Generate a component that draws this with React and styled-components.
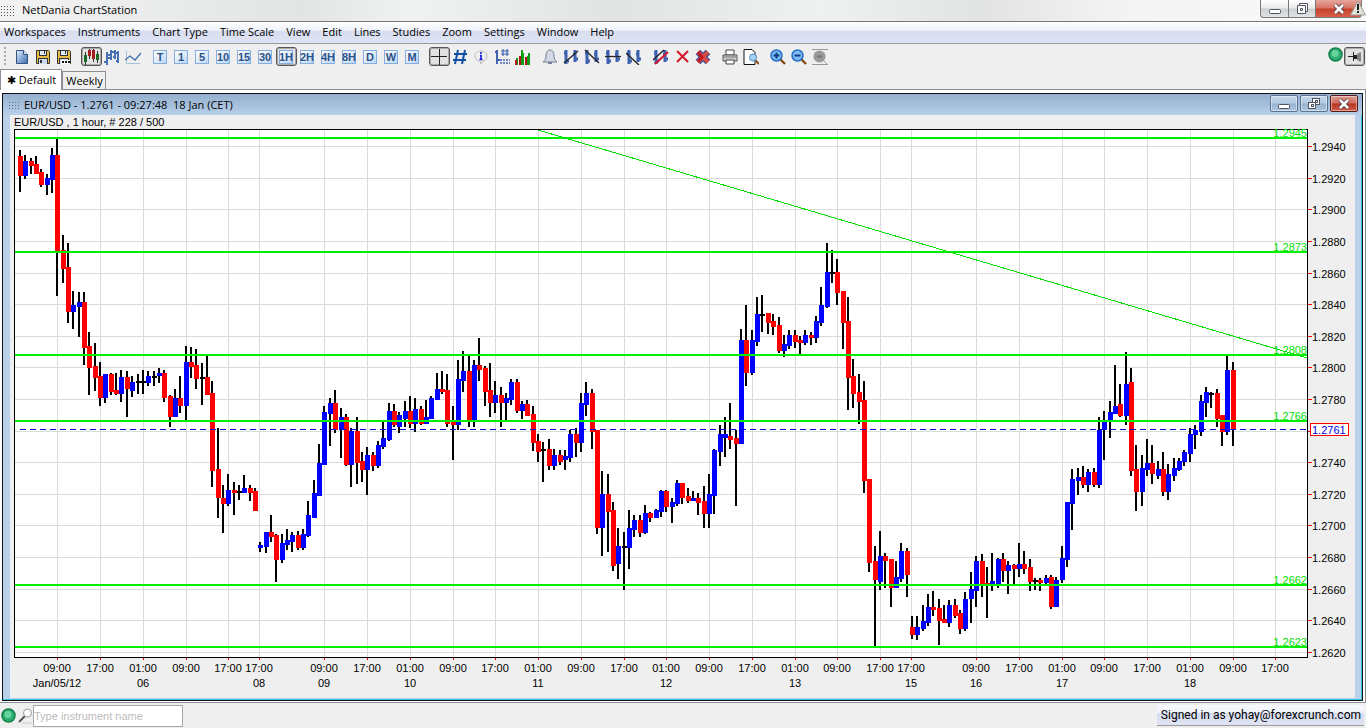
import styled, { createGlobalStyle, css } from "styled-components";

const GlobalStyle = createGlobalStyle`
  * { box-sizing: border-box; }
  body {
    margin: 0;
    background: #efefef;
    color: #000;
    font-family: "Open Sans", "Noto Sans", sans-serif;
    font-size: 11px;
  }
  button, input { font-family: inherit; }
  svg { display: block; }
`;

const Page = styled.div`
  display: flex;
  flex-direction: column;
  min-height: 100vh;
`;

const TitleBar = styled.header`
  display: flex;
  align-items: flex-start;
  height: 22px;
  padding-right: 4px;
  border-bottom: 1px solid #777;
  background: linear-gradient(90deg, #f2f2f2 0%, #e3e5e5 22%, #f0f1f1 30%, #e2e4e4 45%, #eff0f0 60%, #e2e3e3 72%, #f3f3f3 82%, #fafafa 100%);
`;

const AppName = styled.h1`
  flex: 1;
  margin: 0;
  padding-left: 7px;
  font-size: 11px;
  font-weight: 400;
  line-height: 20px;
`;

const Dots = styled.span`
  width: ${p => p.$width}px;
  height: ${p => p.$height}px;
  margin-top: ${p => p.$top}px;
  background: radial-gradient(circle, ${p => p.$color} 1px, transparent 1px) 0 0 / 3px 3px;
`;

const WindowButton = styled.button`
  display: flex;
  align-items: center;
  justify-content: center;
  width: ${p => p.$width}px;
  height: 18px;
  padding: 0;
  border: 1px solid #777b80;
  border-top: 0;
  border-right-width: ${p => (p.$close ? 1 : 0)}px;
  border-radius: ${p => (p.$close ? "0 0 4px 0" : p.$first ? "0 0 0 4px" : "0")};
  background: ${p => p.$close
    ? "linear-gradient(#e5a79c 0%, #d87464 48%, #c4412c 52%, #d8604a 100%)"
    : "linear-gradient(#fff 0%, #e9e9e9 48%, #cfd0d1 52%, #e2e3e4 100%)"};
`;

const Warning = styled.span`
  position: absolute;
  top: 0;
  right: 0;
`;

const MenuBar = styled.nav`
  display: flex;
  align-items: flex-start;
  gap: 12px;
  height: 22px;
  padding-left: 4px;
  border-bottom: 1px solid #999;
  background: linear-gradient(#fff 0%, #eef1f9 40%, #d7ddf0 42%, #e0e4f4 100%);
`;

const MenuItem = styled.button`
  padding: 0;
  border: 0;
  background: none;
  font-size: 11px;
  line-height: 20px;
  color: #000;
  white-space: nowrap;
`;

const ToolBar = styled.div`
  display: flex;
  align-items: flex-start;
  gap: 6px;
  height: 25px;
  padding: 3px 1px 0 4px;
`;

const Grip = styled.span`
  width: 2px;
  height: 20px;
  background: repeating-linear-gradient(#aaa 0 2px, transparent 2px 4px);
`;

const ToolGroup = styled.div`
  display: flex;
`;

const ToolButton = styled.button`
  display: flex;
  align-items: center;
  justify-content: center;
  width: 21px;
  height: 19px;
  padding: 0 1px 0 0;
  border: 0;
  background: none;
  ${p => p.$pressed && css`
    border: 1px solid #555;
    border-radius: 3px;
    box-shadow: inset 0 0 0 1px #aaa;
    background: #e2e2e2;
  `}
`;

const PeriodBox = styled.span`
  display: flex;
  align-items: center;
  justify-content: center;
  flex: none;
  width: 14px;
  height: 14px;
  border: 1px solid #84aee0;
  background: linear-gradient(135deg, #fff, #bcd6f4);
  font: bold 11px/12px "Liberation Sans", Arial, sans-serif;
  color: #2d5288;
`;

const Status = styled.div`
  display: flex;
  gap: 1px;
  margin-left: auto;
`;

const Tabs = styled.div`
  display: flex;
  align-items: flex-end;
  height: 21px;
  border-bottom: 1px solid #8d8d95;
`;

const Tab = styled.button`
  height: ${p => (p.$active ? 21 : 18)}px;
  margin-bottom: ${p => (p.$active ? -1 : 0)}px;
  padding: 0 ${p => (p.$active ? 5 : 2)}px 0 ${p => (p.$active ? 6 : 3)}px;
  border: 1px solid #8d8d95;
  border-bottom: 0;
  background: ${p => (p.$active ? "#fff" : "#efefef")};
  font-size: 11px;
  line-height: 18px;
  color: #000;
  white-space: nowrap;
`;

const Desktop = styled.main`
  padding: 3px 2px 1px 2px;
  border-right: 1px solid #8d8d95;
  border-bottom: 1px solid #8d8d95;
  background: #fff;
`;

const ChartWindow = styled.section`
  border: 1px solid #111;
  background: #b9d1ea;
  box-shadow: inset -1px -1px #35c5e0;
`;

const ChartTitle = styled.div`
  display: flex;
  gap: 2px;
  height: 21px;
  padding: 1px 4px 0 5px;
  background: linear-gradient(#94b0ce, #b7cfe9);
`;

const ChartName = styled.h2`
  flex: 1;
  margin: 0;
  padding-left: 2px;
  font-size: 11px;
  font-weight: 400;
  line-height: 20px;
  white-space: pre;
`;

const ChartButton = styled.button`
  display: flex;
  align-items: center;
  justify-content: center;
  width: 28px;
  height: 17px;
  padding: 0;
  border: 1px solid ${p => (p.$close ? "#5b1a14" : "#587391")};
  border-radius: 2px;
  box-shadow: inset 0 0 0 1px rgba(255, 255, 255, 0.45);
  background: ${p => p.$close
    ? "linear-gradient(#dc9a90 0%, #cf6a5b 48%, #b83520 52%, #cc5c48 100%)"
    : "linear-gradient(#c6d7ea 0%, #b3c9e0 48%, #98b3cf 52%, #afc6df 100%)"};
`;

const ChartBody = styled.div`
  margin: 0 7px 2px;
  background: #efefef;
`;

const ChartInfo = styled.p`
  margin: 0;
  padding-left: 4px;
  font: 11px/14px "Liberation Sans", Arial, sans-serif;
`;

const ChartSvg = styled.svg`
  width: 100%;
  height: auto;
  overflow: visible;
  font-family: "Liberation Sans", Arial, sans-serif;
  font-size: 11px;
`;

const Footer = styled.footer`
  display: flex;
  align-items: center;
  height: 25px;
  padding: 0 2px 0 1px;
`;

const Search = styled.label`
  display: flex;
  align-items: center;
  margin-left: 2px;
`;

const SearchInput = styled.input`
  width: 150px;
  height: 22px;
  padding: 0;
  border: 1px solid #a5a5ad;
  background: #fff;
  font: 11px "Liberation Sans", Arial, sans-serif;
  &::placeholder { color: #bbb; opacity: 1; }
`;

const SignedIn = styled.span`
  margin-left: auto;
  padding: 0 3px 0 4px;
  border-bottom: 1px solid #999;
  background: linear-gradient(#f8f9fd 0%, #eef1f9 40%, #d7ddf0 42%, #e0e4f4 100%);
  font: 12px/20px Roboto, sans-serif;
`;

const menus = ["Workspaces", "Instruments", "Chart Type", "Time Scale", "View", "Edit", "Lines", "Studies", "Zoom", "Settings", "Window", "Help"];
const periods = ["T", "1", "5", "10", "15", "30", "1H", "2H", "4H", "8H", "D", "W", "M"];

// wick x, high, low, body top, body bottom, colour
const candles = `
19 150 192 156 176 r;24 155 179 161 176 b;30 158 174 161 166 r;35 156 174 164 174 r;40 169 187 172 185 r;46 174 195 178 185 b;
51 148 193 155 180 b;56 138 296 155 252 r;62 235 283 250 269 r;67 243 323 267 312 r;72 291 329 305 312 b;78 292 337 302 307 b;
83 292 365 302 348 r;88 332 395 346 368 r;94 343 391 366 378 r;99 362 406 376 398 r;104 374 403 374 398 b;110 373 395 374 392 r;
115 373 395 390 394 r;120 370 402 377 394 b;126 371 417 377 389 r;131 376 397 382 391 b;137 374 394 381 383 k;142 370 394 381 383 k;
147 371 386 376 383 b;153 371 386 376 378 k;158 368 383 373 376 b;163 370 402 373 398 r;169 395 427 396 417 r;174 389 417 398 417 b;
179 376 413 398 406 r;185 346 420 362 406 b;190 347 378 362 367 r;195 349 389 365 379 r;201 363 405 377 379 k;206 355 395 377 395 r;
211 381 487 393 471 r;217 428 518 469 498 r;222 485 533 498 504 r;227 474 506 490 504 b;233 482 515 490 493 r;238 485 500 491 493 k;
243 475 493 488 493 b;249 485 501 488 493 r;254 488 511 491 511 r;259 542 552 545 548 b;265 532 553 532 547 b;270 515 542 532 537 r;
275 534 582 535 560 r;281 534 563 543 560 b;286 529 550 540 545 b;291 532 552 535 542 b;297 531 550 535 548 r;302 529 550 534 548 b;
307 501 537 515 536 b;313 480 518 493 518 b;318 444 496 463 496 b;323 406 465 412 465 b;329 398 446 403 414 b;334 390 433 403 430 r;
340 408 458 417 430 b;345 414 466 417 465 r;350 428 487 431 465 b;356 417 484 431 463 r;361 452 482 461 470 r;366 447 495 455 470 b;
372 452 471 455 466 r;377 441 468 445 466 b;382 421 449 438 447 b;388 403 441 411 440 b;393 404 427 411 425 r;398 412 433 415 427 b;
404 401 427 411 419 b;409 396 428 411 424 r;414 398 432 409 424 b;420 406 425 409 424 r;425 400 424 417 424 b;430 396 419 398 419 b;
436 373 400 389 400 b;441 371 394 389 392 r;446 374 427 390 424 r;452 406 460 421 425 r;457 360 430 379 425 b;462 351 392 371 381 b;
468 355 427 371 421 r;473 360 427 365 421 b;478 338 381 365 370 r;484 366 406 368 392 r;489 363 417 390 403 r;494 381 413 395 403 b;
500 387 427 395 403 r;505 393 421 398 403 b;510 379 405 382 400 b;516 379 413 382 411 r;521 401 419 404 411 b;526 400 416 404 416 r;
532 406 451 414 443 r;537 434 462 441 452 r;542 442 482 449 451 k;548 439 470 449 466 r;553 449 470 455 466 b;559 450 465 455 462 r;
564 450 470 456 460 b;569 430 462 434 458 b;575 428 457 434 443 r;580 393 452 403 443 b;585 382 416 393 405 b;591 389 449 393 432 r;
596 430 534 430 528 r;601 471 556 494 528 b;607 474 552 494 512 r;612 502 571 510 566 r;617 528 579 546 564 b;623 532 590 546 548 k;
628 510 569 528 548 b;633 515 537 520 530 b;639 515 537 520 533 r;644 505 534 513 533 b;649 512 522 513 518 r;655 509 518 510 518 b;
660 490 517 491 512 b;665 490 512 491 507 r;671 498 523 502 507 b;676 480 506 483 504 b;681 483 504 483 498 r;687 488 503 496 501 r;
692 491 501 498 501 b;697 493 515 498 503 r;703 486 528 501 514 r;708 474 528 494 514 b;713 449 514 450 496 b;719 425 466 434 452 b;
724 417 457 434 438 b;729 403 449 436 440 r;735 430 506 438 444 r;740 329 444 340 444 b;745 305 386 340 373 r;751 330 375 340 373 b;
756 297 346 314 342 b;761 295 332 314 316 k;767 313 334 313 323 r;772 314 335 321 327 r;778 317 353 325 351 r;783 335 357 344 351 b;
788 330 349 335 346 b;794 330 348 335 342 r;799 336 355 340 343 r;804 330 345 335 343 b;810 332 345 335 338 r;815 316 343 321 338 b;
820 287 326 305 323 b;826 243 308 272 307 b;831 250 283 272 274 k;836 259 305 272 293 r;842 291 349 291 323 r;847 297 410 321 378 r;
852 359 408 376 394 r;858 374 424 392 402 r;863 381 493 400 481 r;868 479 572 479 563 r;874 546 647 561 580 r;879 531 590 556 582 b;
884 553 588 556 561 r;890 559 607 559 588 r;895 561 588 577 588 b;900 543 582 551 579 b;906 548 597 551 575 r;911 616 639 627 635 r;
916 616 640 627 635 b;922 605 631 621 629 b;927 594 626 607 623 b;932 591 616 607 610 r;938 599 645 608 621 r;943 605 623 619 623 r;
948 600 627 605 623 b;954 599 618 605 616 r;959 610 634 613 629 r;964 592 631 599 629 b;970 572 623 589 599 b;975 556 607 561 591 b;
981 554 597 561 585 r;986 567 618 583 585 r;991 553 591 581 584 b;997 558 588 559 584 b;1002 553 582 559 571 r;1007 561 594 565 571 b;
1013 564 584 565 569 r;1018 543 577 564 569 b;1023 551 574 564 569 r;1029 559 591 567 582 r;1034 578 590 580 582 k;1039 578 591 580 583 r;
1045 575 584 578 583 b;1050 575 609 577 607 r;1055 577 607 580 607 b;1061 546 583 558 580 b;1066 502 567 502 560 b;1071 469 530 479 504 b;
1077 468 495 477 481 b;1082 466 488 477 485 r;1087 469 492 472 485 b;1093 468 487 472 485 r;1098 417 488 430 485 b;1103 411 460 421 430 b;
1109 401 438 412 421 b;1114 365 414 406 414 b;1119 384 417 404 416 r;1125 352 425 384 416 b;1130 368 476 382 471 r;1135 445 511 469 492 r;
1141 455 506 468 492 b;1146 439 476 463 470 b;1151 445 484 463 474 r;1157 461 479 469 476 b;1162 452 496 469 492 r;1167 464 500 474 492 b;
1173 458 481 468 476 b;1178 458 471 461 470 b;1183 450 466 452 462 b;1189 428 462 434 454 b;1194 425 449 430 435 b;1200 395 436 401 432 b;
1205 387 417 392 403 b;1210 392 408 393 395 k;1216 389 427 393 419 r;1221 415 446 415 432 r;1226 356 435 370 432 b;1232 362 446 370 430 r
`.trim().split(";").map(row => row.trim().split(" "));

const fills = { r: "#f00", b: "#00f", k: "#000" };

const prices = [
  [146, "1.2940"], [178, "1.2920"], [209, "1.2900"], [241, "1.2880"], [273, "1.2860"], [304, "1.2840"],
  [336, "1.2820"], [367, "1.2800"], [399, "1.2780"], [431, ""], [462, "1.2740"], [494, "1.2720"],
  [525, "1.2700"], [557, "1.2680"], [589, "1.2660"], [620, "1.2640"], [652, "1.2620"],
];

const times = [
  [57, "09:00", "Jan/05/12"], [100, "17:00"], [143, "01:00", "06"], [186, "09:00"], [228, "17:00"], [259, "17:00", "08"],
  [324, "09:00", "09"], [367, "17:00"], [410, "01:00", "10"], [453, "09:00"], [495, "17:00"], [538, "01:00", "11"],
  [581, "09:00"], [624, "17:00"], [666, "01:00", "12"], [709, "09:00"], [752, "17:00"], [795, "01:00", "13"],
  [837, "09:00"], [880, "17:00"], [911, "17:00", "15"], [976, "09:00", "16"], [1019, "17:00"], [1062, "01:00", "17"],
  [1104, "09:00"], [1147, "17:00"], [1190, "01:00", "18"], [1233, "09:00"], [1275, "17:00"],
];

const levels = [[137, "1.2945"], [251, "1.2873"], [354, "1.2808"], [420, "1.2766"], [584, "1.2662"], [646, "1.2623"]];

function Chart() {
  return (
    <ChartSvg viewBox="10 129 1345 569" role="img" aria-label="EUR/USD hourly candles">
      <g shapeRendering="crispEdges">
        <rect x="14" y="129" width="1294" height="529" fill="#000" />
        <rect x="15" y="130" width="1292" height="527" fill="#fff" />
        {prices.map(([y]) => (
          <g key={y}>
            <rect x="15" y={y} width="1292" height="1" fill="#dadada" />
            <rect x="1308" y={y} width="4" height="1" fill="#f00" />
          </g>
        ))}
        {times.map(([x]) => (
          <g key={x}>
            <rect x={x} y="130" width="1" height="527" fill="#dadada" />
            <rect x={x} y="658" width="1" height="2" fill="#f00" />
          </g>
        ))}
        {candles.map(([x, high, low, top, bottom, color]) => (
          <g key={x}>
            <rect x={x} y={high} width="2" height={low - high} fill="#000" />
            <rect x={x - 1} y={top} width="5" height={bottom - top} fill={fills[color]} />
          </g>
        ))}
        <path d="M20 429.5H1307" stroke="#0000d0" strokeDasharray="6 4" />
        {levels.map(([y]) => <rect key={y} x="15" y={y} width="1292" height="2" fill="#00ee00" />)}
        <path d="M538 130L1307 358" stroke="#00e000" />
      </g>
      <g fill="#00e000" textAnchor="end">
        {levels.map(([y, label]) => <text key={y} x="1307" y={y}>{label}</text>)}
      </g>
      {prices.map(([y, label]) => label && <text key={y} x="1312" y={y + 5}>{label}</text>)}
      <rect x="1310.5" y="423.5" width="38" height="12" fill="#fff" stroke="#f00" />
      <text x="1312" y="434" fill="#00d">1.2761</text>
      <g textAnchor="middle">
        {times.map(([x, time, day]) => (
          <g key={x}>
            <text x={x} y="672">{time}</text>
            {day && <text x={x} y="687">{day}</text>}
          </g>
        ))}
      </g>
    </ChartSvg>
  );
}

const bars = <path d="M3 1v14M1 4h2M3 12h3M12 1v12M10 5h2M12 10h3" stroke="#3f62b0" strokeWidth="3" />;

const floppy = (
  <>
    <path d="M1.500 1.500h12l1 1v12h-13z" fill="#e9bd45" stroke="#333" />
    <path d="M4 1h8v6H4z" fill="#333" />
    <path d="M5 2h6v4H5z" fill="#dfe9f8" />
    <path d="M3 9h10v6H3z" fill="#333" />
    <path d="M4 10h8v5H4z" fill="#cddbf0" />
    <path d="M9 2h1v3H9zM5 11h2v3H5z" fill="#333" />
  </>
);

const lens = (
  <>
    <path d="M10 10l5 5" stroke="#8b4a17" strokeWidth="2.400" />
    <circle cx="6.500" cy="6.500" r="5.500" fill="#7fbcf5" stroke="#246fc4" strokeWidth="1.500" />
  </>
);

const drawings = {
  new: (
    <>
      <path d="M2.500 1.500h7l4 4v9h-11z" fill="url(#page)" stroke="#34527e" />
      <path d="M9.500 1.500v4h4" fill="#dceaff" stroke="#34527e" />
    </>
  ),
  save: floppy,
  saveAs: <>{floppy}<path d="M5 11h9v4H5z" fill="#fff" /><path d="M6 13h2M9 13h2M12 13h2" stroke="#111" strokeWidth="2" /></>,
  candles: (
    <>
      <path d="M2.500 3v13M6.500 0v10M10.500 0v13M14.500 2v12" stroke="#333" />
      <path d="M1 6h3v7H1zM13 5h3v6h-3z" fill="#176b22" />
      <path d="M5 1h3v6H5zM9 1h3v9H9z" fill="#a81d1d" />
    </>
  ),
  ohlc: <path d="M3 3v13M0 13h3M3 6h3M7 1v10M4 9h3M7 3h3M11 1v9M9 8h2M11 4h4M14 2v12M12 12h2" stroke="#4770b5" strokeWidth="2" />,
  line: (
    <>
      <path d="M1.500 2v12.500H15" stroke="#a9c0dd" />
      <path d="M0 11l5-4 5 4 6-7" stroke="#3f6fae" strokeWidth="1.300" />
    </>
  ),
  cross: <path d="M8.500 0v16M0 7.500h16" stroke="#222" />,
  hash: <path d="M6 1L3 15M13 1l-3 14M2 5h13M1 11h13" stroke="#0d4fa5" strokeWidth="2" />,
  info: (
    <>
      <path d="M8 2c3.500 0 6 2 6 5s-2 4-4 5l-2 3-1-3c-3 0-5-2-5-5s2.500-5 6-5z" fill="#f0f0f0" stroke="#bbb" />
      <path d="M8 3v2M8 6v5M7 6.500h1M6.500 10.500h3" stroke="#1717e0" strokeWidth="1.600" />
    </>
  ),
  barGrid: (
    <>
      <path d="M3 1v14M1 3h2M3 11h3" stroke="#3f62b0" strokeWidth="2" />
      <path d="M9 0v7M13 0v7M7 2h8M7 5h8" stroke="#3f62b0" strokeWidth="1.200" />
      <path d="M6 11h10M6 14h10" stroke="#3f62b0" strokeWidth="1.500" strokeDasharray="2 1" />
    </>
  ),
  volume: (
    <>
      <path d="M2 9v7M8 4v12M14 4v12" stroke="#119a15" strokeWidth="2" />
      <path d="M0 11h2v5H0zM4 7h2v9H4zM10 8h2v8h-2z" fill="#b3151c" />
      <path d="M6 1h2v15H6zM12 7h2v9h-2z" fill="#119a15" />
    </>
  ),
  bell: (
    <>
      <path d="M8 1c3 0 4 3 4 6 0 3 1 4 3 6H1c2-2 3-3 3-6 0-3 1-6 4-6z" fill="#d3dae5" stroke="#718096" />
      <path d="M6 14h4" stroke="#718096" strokeWidth="2" />
    </>
  ),
  trend: <>{bars}<path d="M1 14L15 2" stroke="#222" strokeWidth="1.300" /></>,
  down: <>{bars}<path d="M1 1l14 13" stroke="#222" strokeWidth="1.300" /></>,
  flat: <>{bars}<path d="M0 7.500h16" stroke="#222" strokeWidth="1.300" /></>,
  back: <>{bars}<path d="M0 4l13 12" stroke="#222" strokeWidth="1.300" /></>,
  channel: <>{bars}<path d="M0 11L11 1" stroke="#222" strokeWidth="1.300" /><path d="M2 15L15 3" stroke="#d5152a" strokeWidth="2" /></>,
  remove: <path d="M3 2l11 11M14 2L3 13" stroke="#d5152a" strokeWidth="2" />,
  removeAll: (
    <>
      <path d="M3 3l10 10M13 3L3 13" stroke="#314f9c" strokeWidth="6.500" />
      <path d="M3 3l10 10M13 3L3 13" stroke="#d94a42" strokeWidth="4" />
      <path d="M3 3l4 5-4 5" stroke="#c01822" strokeWidth="3" />
    </>
  ),
  print: (
    <>
      <path d="M4 1h8v5H4z" fill="#fff" stroke="#444" />
      <path d="M1 6h14v6H1z" fill="#c9cec7" stroke="#555" />
      <path d="M4 11h8v4H4z" fill="#fff" stroke="#444" />
      <path d="M2 8h12" stroke="#777" />
    </>
  ),
  preview: (
    <>
      <path d="M1 .5h8l3 3v12H1z" fill="#fff" stroke="#111" />
      <path d="M12 11l4 4" stroke="#8b4a17" strokeWidth="2" />
      <circle cx="10" cy="8.500" r="3.500" fill="#a6d2f6" stroke="#4c8ec8" />
    </>
  ),
  zoomIn: <>{lens}<path d="M3.500 6.500h6M6.500 3.500v6" stroke="#0b3c85" strokeWidth="2" /></>,
  zoomOut: <>{lens}<path d="M3.500 6.500h6" stroke="#0b3c85" strokeWidth="2" /></>,
  zoomFit: (
    <>
      <path d="M0 .5h16M0 15.500h16M11 11l4 4" stroke="#999" />
      <circle cx="7.500" cy="7.500" r="6" fill="#999" />
      <path d="M5 7.500h5" stroke="#777" strokeWidth="2" />
    </>
  ),
  pin: (
    <>
      <path d="M2 7.500h5M7.500 3v9" stroke="#222" />
      <path d="M8 6h3v4H8z" fill="#222" />
      <path d="M12 4.500v7M14 3.500v9" stroke="#222" />
    </>
  ),
};

const groups = [
  ["new", "save", "saveAs"],
  ["candles", "ohlc", "line"],
  periods,
  ["cross", "hash", "info", "barGrid", "volume"],
  ["bell", "trend", "down", "flat", "back"],
  ["channel", "remove", "removeAll"],
  ["print", "preview"],
  ["zoomIn", "zoomOut", "zoomFit"],
];
const pressed = ["candles", "1H", "cross", "pin"];

const Drawing = styled.svg`
  flex: none;
  width: 16px;
  height: 16px;
`;

function Tool({ name }) {
  return (
    <ToolButton type="button" aria-label={name} $pressed={pressed.includes(name)}>
      {drawings[name]
        ? <Drawing viewBox="0 0 16 16" fill="none">{drawings[name]}</Drawing>
        : <PeriodBox>{name}</PeriodBox>}
    </ToolButton>
  );
}

function GreenDot() {
  return (
    <svg width="15" height="15" viewBox="0 0 15 15">
      <circle cx="7.500" cy="7.500" r="6.500" fill="#2fae72" stroke="#118049" strokeWidth="1.500" />
      <circle cx="7" cy="6.500" r="3.500" fill="#67d49e" />
    </svg>
  );
}

function Glyph({ kind }) {
  return (
    <svg width="14" height="12" viewBox="0 0 14 12" fill="none">
      {kind === "min" && <rect x="1.500" y="6.500" width="11" height="4" rx="1" fill="#fff" stroke="#505565" />}
      {kind === "max" && (
        <>
          <path d="M4.500.5h8v8h-2v2h-8v-8h2z" fill="#fff" stroke="#505565" />
          <path d="M4.500 2.500h6v6M5.500 5.500h2v2h-2z" stroke="#505565" />
        </>
      )}
      {kind === "restore" && (
        <>
          <rect x="5.500" y=".5" width="7" height="6" fill="#fff" stroke="#505565" />
          <rect x="8.500" y="2.500" width="2" height="2" stroke="#505565" />
          <rect x="1.500" y="4.500" width="7" height="6" fill="#fff" stroke="#505565" />
          <rect x="4.500" y="6.500" width="2" height="2" stroke="#505565" />
        </>
      )}
      {kind === "close" && (
        <>
          <path d="M3 2l8 8M11 2l-8 8" stroke="#554047" strokeWidth="4.500" />
          <path d="M3 2l8 8M11 2l-8 8" stroke="#fff" strokeWidth="2.500" />
        </>
      )}
    </svg>
  );
}

const Defs = styled.svg`
  position: absolute;
  width: 0;
  height: 0;
`;

export default function App() {
  return (
    <Page>
      <GlobalStyle />
      <Defs>
        <linearGradient id="page" x1="0" y1="0" x2="1" y2="1">
          <stop offset="0" stopColor="#e3efff" />
          <stop offset="1" stopColor="#356bb5" />
        </linearGradient>
      </Defs>
      <TitleBar>
        <Dots $width={15} $height={12} $top={5} $color="#555" />
        <AppName>NetDania ChartStation</AppName>
        <WindowButton type="button" aria-label="Minimize" $width={28} $first><Glyph kind="min" /></WindowButton>
        <WindowButton type="button" aria-label="Maximize" $width={27}><Glyph kind="max" /></WindowButton>
        <WindowButton type="button" aria-label="Close" $width={47} $close><Glyph kind="close" /></WindowButton>
        <Warning>
          <svg width="16" height="16" viewBox="0 0 16 16">
            <path d="M8 1l7.500 14H.5z" fill="#e2e2dc" stroke="#999" />
            <path d="M8 4v6M8 11v2" stroke="#222" strokeWidth="2" />
          </svg>
        </Warning>
      </TitleBar>
      <MenuBar>
        {menus.map(name => <MenuItem key={name} type="button">{name}</MenuItem>)}
      </MenuBar>
      <ToolBar>
        <Grip />
        {groups.map((names, i) => (
          <ToolGroup key={i}>
            {names.map(name => <Tool key={name} name={name} />)}
          </ToolGroup>
        ))}
        <Status>
          <GreenDot />
          <Tool name="pin" />
        </Status>
      </ToolBar>
      <Tabs>
        <Tab type="button" $active>✱ Default</Tab>
        <Tab type="button">Weekly</Tab>
      </Tabs>
      <Desktop>
        <ChartWindow>
          <ChartTitle>
            <Dots $width={12} $height={9} $top={6} $color="#5d7184" />
            <ChartName>EUR/USD - 1.2761 - 09:27:48  18 Jan (CET)</ChartName>
            <ChartButton type="button" aria-label="Minimize chart"><Glyph kind="min" /></ChartButton>
            <ChartButton type="button" aria-label="Restore chart"><Glyph kind="restore" /></ChartButton>
            <ChartButton type="button" aria-label="Close chart" $close><Glyph kind="close" /></ChartButton>
          </ChartTitle>
          <ChartBody>
            <ChartInfo>EUR/USD , 1 hour, # 228 / 500</ChartInfo>
            <Chart />
          </ChartBody>
        </ChartWindow>
      </Desktop>
      <Footer>
        <GreenDot />
        <Search>
          <svg width="15" height="16" viewBox="0 0 15 16" fill="none">
            <path d="M1 14l6-6" stroke="#555" strokeWidth="2" />
            <circle cx="9.500" cy="5" r="4" fill="#fff" stroke="#999" />
            <path d="M4 15h10" stroke="#ccc" />
          </svg>
          <SearchInput type="text" aria-label="Instrument name" placeholder="Type instrument name" />
        </Search>
        <SignedIn>Signed in as yohay@forexcrunch.com</SignedIn>
      </Footer>
    </Page>
  );
}
